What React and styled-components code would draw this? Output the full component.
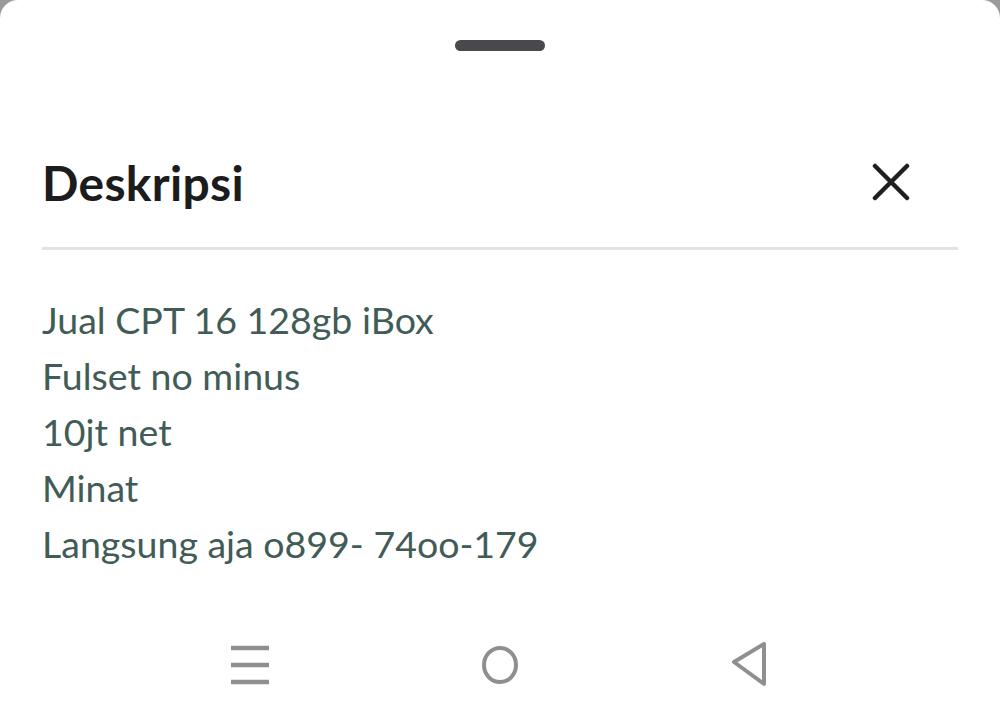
import React from 'react';
import styled, { createGlobalStyle } from 'styled-components';

const GlobalStyle = createGlobalStyle`
  html, body {
    margin: 0;
    padding: 0;
    background: #9a9a9a;
  }
  body {
    font-family: 'Lato', 'Noto Sans', sans-serif;
  }
`;

const Sheet = styled.div`
  width: 1000px;
  height: 719px;
  background: #fff;
  border-radius: 18px 18px 0 0;
  display: flex;
  flex-direction: column;
  overflow: hidden;
`;

const HandleRow = styled.div`
  display: flex;
  justify-content: center;
  padding-top: 40px;
`;

const Handle = styled.div`
  width: 90px;
  height: 11px;
  border-radius: 6px;
  background: #48484d;
`;

const Content = styled.div`
  padding: 0 42px;
  flex: 1;
`;

const Header = styled.div`
  display: flex;
  align-items: center;
  justify-content: space-between;
  height: 130px;
  margin-top: 66px;
  border-bottom: 3px solid #e3e3e3;
`;

const Title = styled.h1`
  margin: 0;
  font-size: 48px;
  font-weight: 700;
  color: #1c1c1c;
  letter-spacing: 0.3px;
`;

const CloseButton = styled.button`
  border: none;
  background: none;
  padding: 0;
  margin-right: 48px;
  width: 38px;
  height: 38px;
  display: flex;
  align-items: center;
  justify-content: center;
  cursor: pointer;
`;

const Body = styled.div`
  padding-top: 42px;
`;

const Line = styled.div`
  font-size: 37.5px;
  line-height: 56px;
  color: #415c56;
  font-weight: 400;
`;

const NavBar = styled.div`
  flex: 0 0 108px;
  display: grid;
  grid-template-columns: repeat(3, 250px);
  justify-content: center;
  align-items: center;
  justify-items: center;
`;

const NavIcon = styled.div`
  width: 44px;
  height: 46px;
  display: flex;
  align-items: center;
  justify-content: center;
`;

const lines = [
  'Jual CPT 16 128gb iBox',
  'Fulset no minus',
  '10jt net',
  'Minat',
  'Langsung aja o899- 74oo-179',
];

export default function App() {
  return (
    <>
      <GlobalStyle />
      <Sheet>
        <HandleRow>
          <Handle />
        </HandleRow>
        <Content>
          <Header>
            <Title>Deskripsi</Title>
            <CloseButton aria-label="Tutup">
              <svg width="38" height="38" viewBox="0 0 38 38">
                <path d="M3 3 L35 35 M35 3 L3 35" stroke="#1f1f1f" strokeWidth="4.5" strokeLinecap="round" />
              </svg>
            </CloseButton>
          </Header>
          <Body>
            {lines.map((l) => (
              <Line key={l}>{l}</Line>
            ))}
          </Body>
        </Content>
        <NavBar>
          <NavIcon>
            <svg width="40" height="40" viewBox="0 0 40 40">
              <path d="M1 3 H39 M1 20 H39 M1 37 H39" stroke="#8f8f8f" strokeWidth="4.5" />
            </svg>
          </NavIcon>
          <NavIcon>
            <svg width="40" height="40" viewBox="0 0 40 40">
              <ellipse cx="20" cy="20" rx="16" ry="17" fill="none" stroke="#8f8f8f" strokeWidth="4" />
            </svg>
          </NavIcon>
          <NavIcon>
            <svg width="40" height="46" viewBox="0 0 40 46">
              <path d="M4 20 L34 2 L34 42 Z" fill="none" stroke="#8f8f8f" strokeWidth="4" strokeLinejoin="round" />
            </svg>
          </NavIcon>
        </NavBar>
      </Sheet>
    </>
  );
}
